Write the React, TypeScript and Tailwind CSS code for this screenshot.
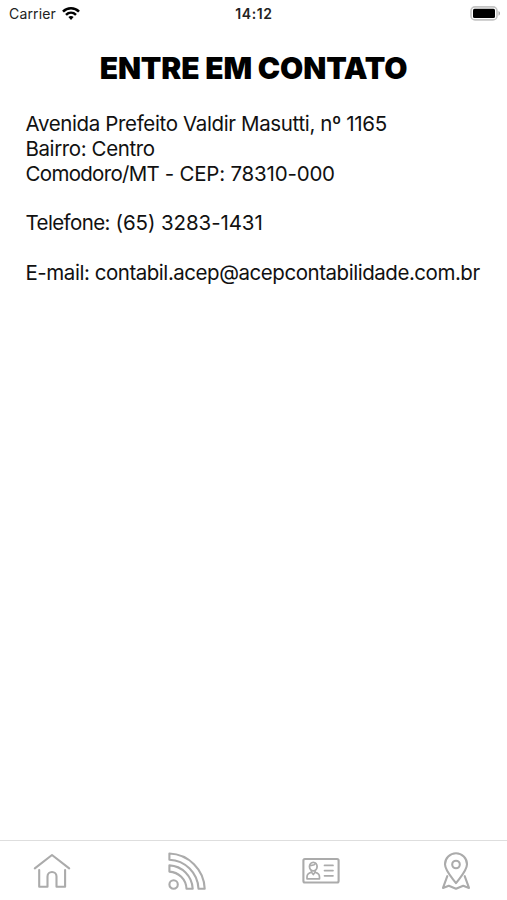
import type { ReactNode } from 'react';

const stroke = {
    fill: 'none',
    stroke: 'currentColor',
    strokeWidth: 2.1,
    strokeLinecap: 'round',
    strokeLinejoin: 'round',
} as const;

function StatusBar() {
    return (
        <header className="relative flex h-7 items-center justify-between pl-[9px] pr-[6px] text-[#222]">
            <div className="flex items-center gap-[6px]">
                <span className="text-[14px] leading-7 tracking-[0.15px]">Carrier</span>
                <svg width="18" height="14" viewBox="0 0 18 14" fill="none" stroke="#000" strokeWidth="2.5">
                    <path d="M1 4.7C5.4 .2 12.6 .2 17 4.7" />
                    <path d="M4 7.8c2.9-2.8 7.1-2.8 10 0" />
                    <path d="M6.4 10.1c1.5-1.4 3.7-1.4 5.2 0L9 13z" fill="#000" stroke="none" />
                </svg>
            </div>
            <span className="absolute inset-x-0 pl-px text-center text-[14px] font-semibold leading-7 tracking-[0.6px]">14:12</span>
            <svg width="31" height="16" viewBox="0 0 31 16">
                <rect x="1" y="0.9" width="26" height="13" rx="4" fill="#fff" stroke="#c4c4c4" strokeWidth="1.6" />
                <rect x="3" y="2.8" width="22" height="9.2" rx="1.5" fill="#000" />
                <path d="M28.5 5.1v4.6c2-.8 2-3.800 0-4.600z" fill="#aaa" />
            </svg>
        </header>
    );
}

function TabButton({ label, children }: { label: string; children: ReactNode }) {
    return (
        <button type="button" aria-label={label} className="h-[38px] w-[38px]">
            <svg width="38" height="38" viewBox="0 0 38 38" {...stroke}>
                {children}
            </svg>
        </button>
    );
}

export default function App() {
    return (
        <div className="flex h-[900px] w-[507px] flex-col bg-white font-['Inter',sans-serif]">
            <StatusBar />

            {/* Content */}
            <main className="flex-1 px-[26px] pt-[20px] text-[#111]">
                <h1 className="whitespace-nowrap text-center text-[30px] font-black leading-[40px] tracking-[-0.15px] text-black">
                    ENTRE EM CONTATO
                </h1>
                <div className="-ml-[0.5px] whitespace-nowrap pt-[24px] text-[20.5px] leading-[24.8px]">
                    <p className="tracking-[-0.36px]">Avenida Prefeito Valdir Masutti, nº 1165</p>
                    <p className="tracking-[-0.4px]">Bairro: Centro</p>
                    <p className="tracking-[-0.2px]">
                        <span className="tracking-[-0.69px]">Comodoro/MT</span> - CEP: 78310-000
                    </p>
                    <p className="mt-[24.8px] tracking-[-0.09px]">
                        <span className="tracking-[-0.6px]">Telefone:</span> (65) 3283-1431
                    </p>
                    <p className="mt-[24.8px] tracking-[-0.46px]">E-mail: contabil.acep@acepcontabilidade.com.br</p>
                </div>
            </main>

            {/* Tab bar */}
            <nav className="flex h-[60px] justify-between border-t border-[#dedede] pl-[33px] pr-[32px] pt-[11px] text-[#ababab]">
                <TabButton label="Início">
                    <path d="M1.8 16.3 19 3l17.2 13.3" />
                    <path d="M6.2 18v16.7h8.3V24.5a4.5 4.5 0 0 1 9 0v10.2h8.6V18" />
                </TabButton>
                <TabButton label="Notícias">
                    <circle cx="5.6" cy="32.5" r="4.2" />
                    <path d="M1.4 1.5C20.5 2.2 36 17.6 36.7 36.7h-6.2C29.8 21 17.2 8.3 1.4 7.7z" />
                    <path d="M1.4 13.4C14 14 24.1 24.1 24.7 36.7h-6.2C18 27.4 10.7 20.1 1.4 19.6z" />
                </TabButton>
                <TabButton label="Contato">
                    <rect x="1.4" y="7" width="35.2" height="23.5" rx="1.5" />
                    <ellipse cx="11.3" cy="14.6" rx="3.8" ry="4.3" strokeWidth="1.8" />
                    <path d="M8 13.3c3 .4 4.8-.4 5.6-1.9M9.5 18.5v1.8c-3 .8-4.5 1.7-4.5 4.7v1.8h12.5V25c0-3-1.5-3.9-4.4-4.7v-1.8M9.5 20.3l1.8 2.2 1.8-2.2M22.5 13.4h8.5M22.5 18.6h8.5M22.5 23.8h8.5" strokeWidth="1.7" />
                </TabButton>
                <TabButton label="Localização">
                    <circle cx="19" cy="12.5" r="3.8" />
                    <path d="M19 31.2C14.5 25 8 18.5 8 12.3a11 11 0 0 1 22 0C30 18.5 23.5 25 19 31.2z" />
                    <path d="M10.3 24.2 6 35.9l5.8-2.2 7.2 3 7.2-3 5.8 2.2-4.3-11.7" />
                </TabButton>
            </nav>
        </div>
    );
}
